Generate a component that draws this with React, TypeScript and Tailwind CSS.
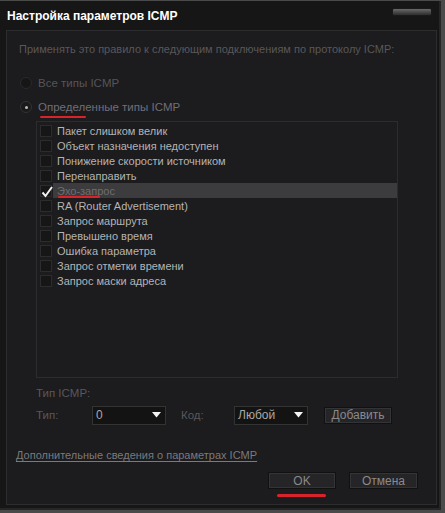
import React from "react";

const items = [
  "Пакет слишком велик",
  "Объект назначения недоступен",
  "Понижение скорости источником",
  "Перенаправить",
  "Эхо-запрос",
  "RA (Router Advertisement)",
  "Запрос маршрута",
  "Превышено время",
  "Ошибка параметра",
  "Запрос отметки времени",
  "Запрос маски адреса",
];

const Check = () => (
  <svg width="12" height="12" viewBox="0 0 12 12" className="absolute left-0 top-0">
    <polyline points="1.5,6.5 4.5,10 11,1" fill="none" stroke="#f2f2f2" strokeWidth="2" />
  </svg>
);

const Select = ({ value }: { value: string }) => (
  <div className="w-[74px] h-[19px] bg-[#131313] border border-[#333] flex items-center justify-between pl-[3px] pr-[4px] text-[#a8a8a8] text-[12px]">
    <span>{value}</span>
    <svg width="9" height="6" viewBox="0 0 9 6">
      <polygon points="0,0 9,0 4.5,5.5" fill="#f4f4f4" />
    </svg>
  </div>
);

const Button = ({ label, w }: { label: string; w: string }) => (
  <div className={`${w} h-[17px] bg-[#252427] border border-[#111] shadow-[inset_0_0_0_1px_#343336] flex items-center justify-center text-[#8a8a8a] text-[12px]`}>
    {label}
  </div>
);

export default function App() {
  return (
    <div
      className="w-[445px] h-[513px] bg-[#4a4a4a] overflow-hidden text-[11px] leading-4"
      style={{ fontFamily: '"Liberation Sans", Arial, sans-serif' }}
    >
      <div className="w-[441px] h-[509px] mt-px bg-[#161616] border-r-2 border-b-2 border-[#262626] flex flex-col">
        {/* title bar */}
        <div className="h-[29px] flex items-start justify-between pl-[7px] pr-[7px]">
          <span className="mt-[7px] text-white font-bold text-[12px]">Настройка параметров ICMP</span>
          <div className="mt-[7px] w-[40px] h-[8px] rounded-[2px] bg-gradient-to-b from-[#6a6a6a] to-[#2e2e2e] border border-[#1a1a1a]" />
        </div>

        {/* content panel */}
        <div className="ml-[6px] w-[431px] h-[475px] bg-[#1c1b1e] border border-[#2d2d2f] flex flex-col">
          <div className="mt-[10px] pl-[12px] text-[#58585a]">
            Применять это правило к следующим подключениям по протоколу ICMP:
          </div>

          <div className="mt-[18px] pl-[13px] flex items-center gap-[6px] text-[#555557] text-[11.5px]">
            <span className="w-[12px] h-[12px] rounded-full bg-[#161616] border border-[#2a2a2a]" />
            <span>Все типы ICMP</span>
          </div>

          <div className="mt-[8px] pl-[13px] flex items-center gap-[6px] text-[#6f6f78] text-[11.5px]">
            <span className="w-[12px] h-[12px] rounded-full bg-[#1a1a1a] border border-[#333] flex items-center justify-center">
              <span className="w-[3px] h-[3px] rounded-full bg-[#bbb]" />
            </span>
            <span className="relative">
              Определенные типы ICMP
              <span className="absolute left-[2px] top-[17px] w-[46px] h-[2px] bg-[#d9232b] rounded-full" />
            </span>
          </div>

          {/* list */}
          <div className="mt-[6px] ml-[29px] w-[362px] h-[257px] border border-[#2c2c2e] pt-px">
            {items.map((it, i) => {
              const sel = i === 4;
              return (
                <div key={it} className="h-[15px] flex items-center">
                  <span className="ml-[3px] relative w-[12px] h-[12px] bg-[#161616] border border-[#2c2c2c]">
                    {sel && <Check />}
                  </span>
                  <span
                    className={`ml-px flex-1 h-[15px] flex items-center pl-[4px] ${
                      sel ? "bg-[#3c3c3e] text-[#6e6e6e]" : "text-[#b4b4b4]"
                    }`}
                  >
                    <span className="relative">
                      {it}
                      {sel && <span className="absolute left-px top-[13px] w-[42px] h-[2px] bg-[#d9232b] rounded-full" />}
                    </span>
                  </span>
                </div>
              );
            })}
          </div>

          <div className="mt-[7px] pl-[29px] text-[#58585a] text-[11.5px]">Тип ICMP:</div>

          <div className="mt-[4px] pl-[29px] flex items-center h-[20px] text-[11.5px]">
            <span className="w-[56px] text-[#58585a]">Тип:</span>
            <Select value="0" />
            <span className="ml-[15px] w-[53px] text-[#58585a]">Код:</span>
            <Select value="Любой" />
            <div className="ml-[16px]">
              <Button label="Добавить" w="w-[68px]" />
            </div>
          </div>

          <div className="mt-[22px] pl-[9px]">
            <span className="text-[#7a7a7c] underline underline-offset-2">
              Дополнительные сведения о параметрах ICMP
            </span>
          </div>

          <div className="mt-[9px] pr-[18px] flex justify-end gap-[13px]">
            <div className="relative">
              <Button label="OK" w="w-[68px]" />
              <span className="absolute left-[9px] top-[22px] w-[49px] h-[3px] bg-[#d9232b] rounded-full" />
            </div>
            <Button label="Отмена" w="w-[69px]" />
          </div>
        </div>
      </div>
    </div>
  );
}
